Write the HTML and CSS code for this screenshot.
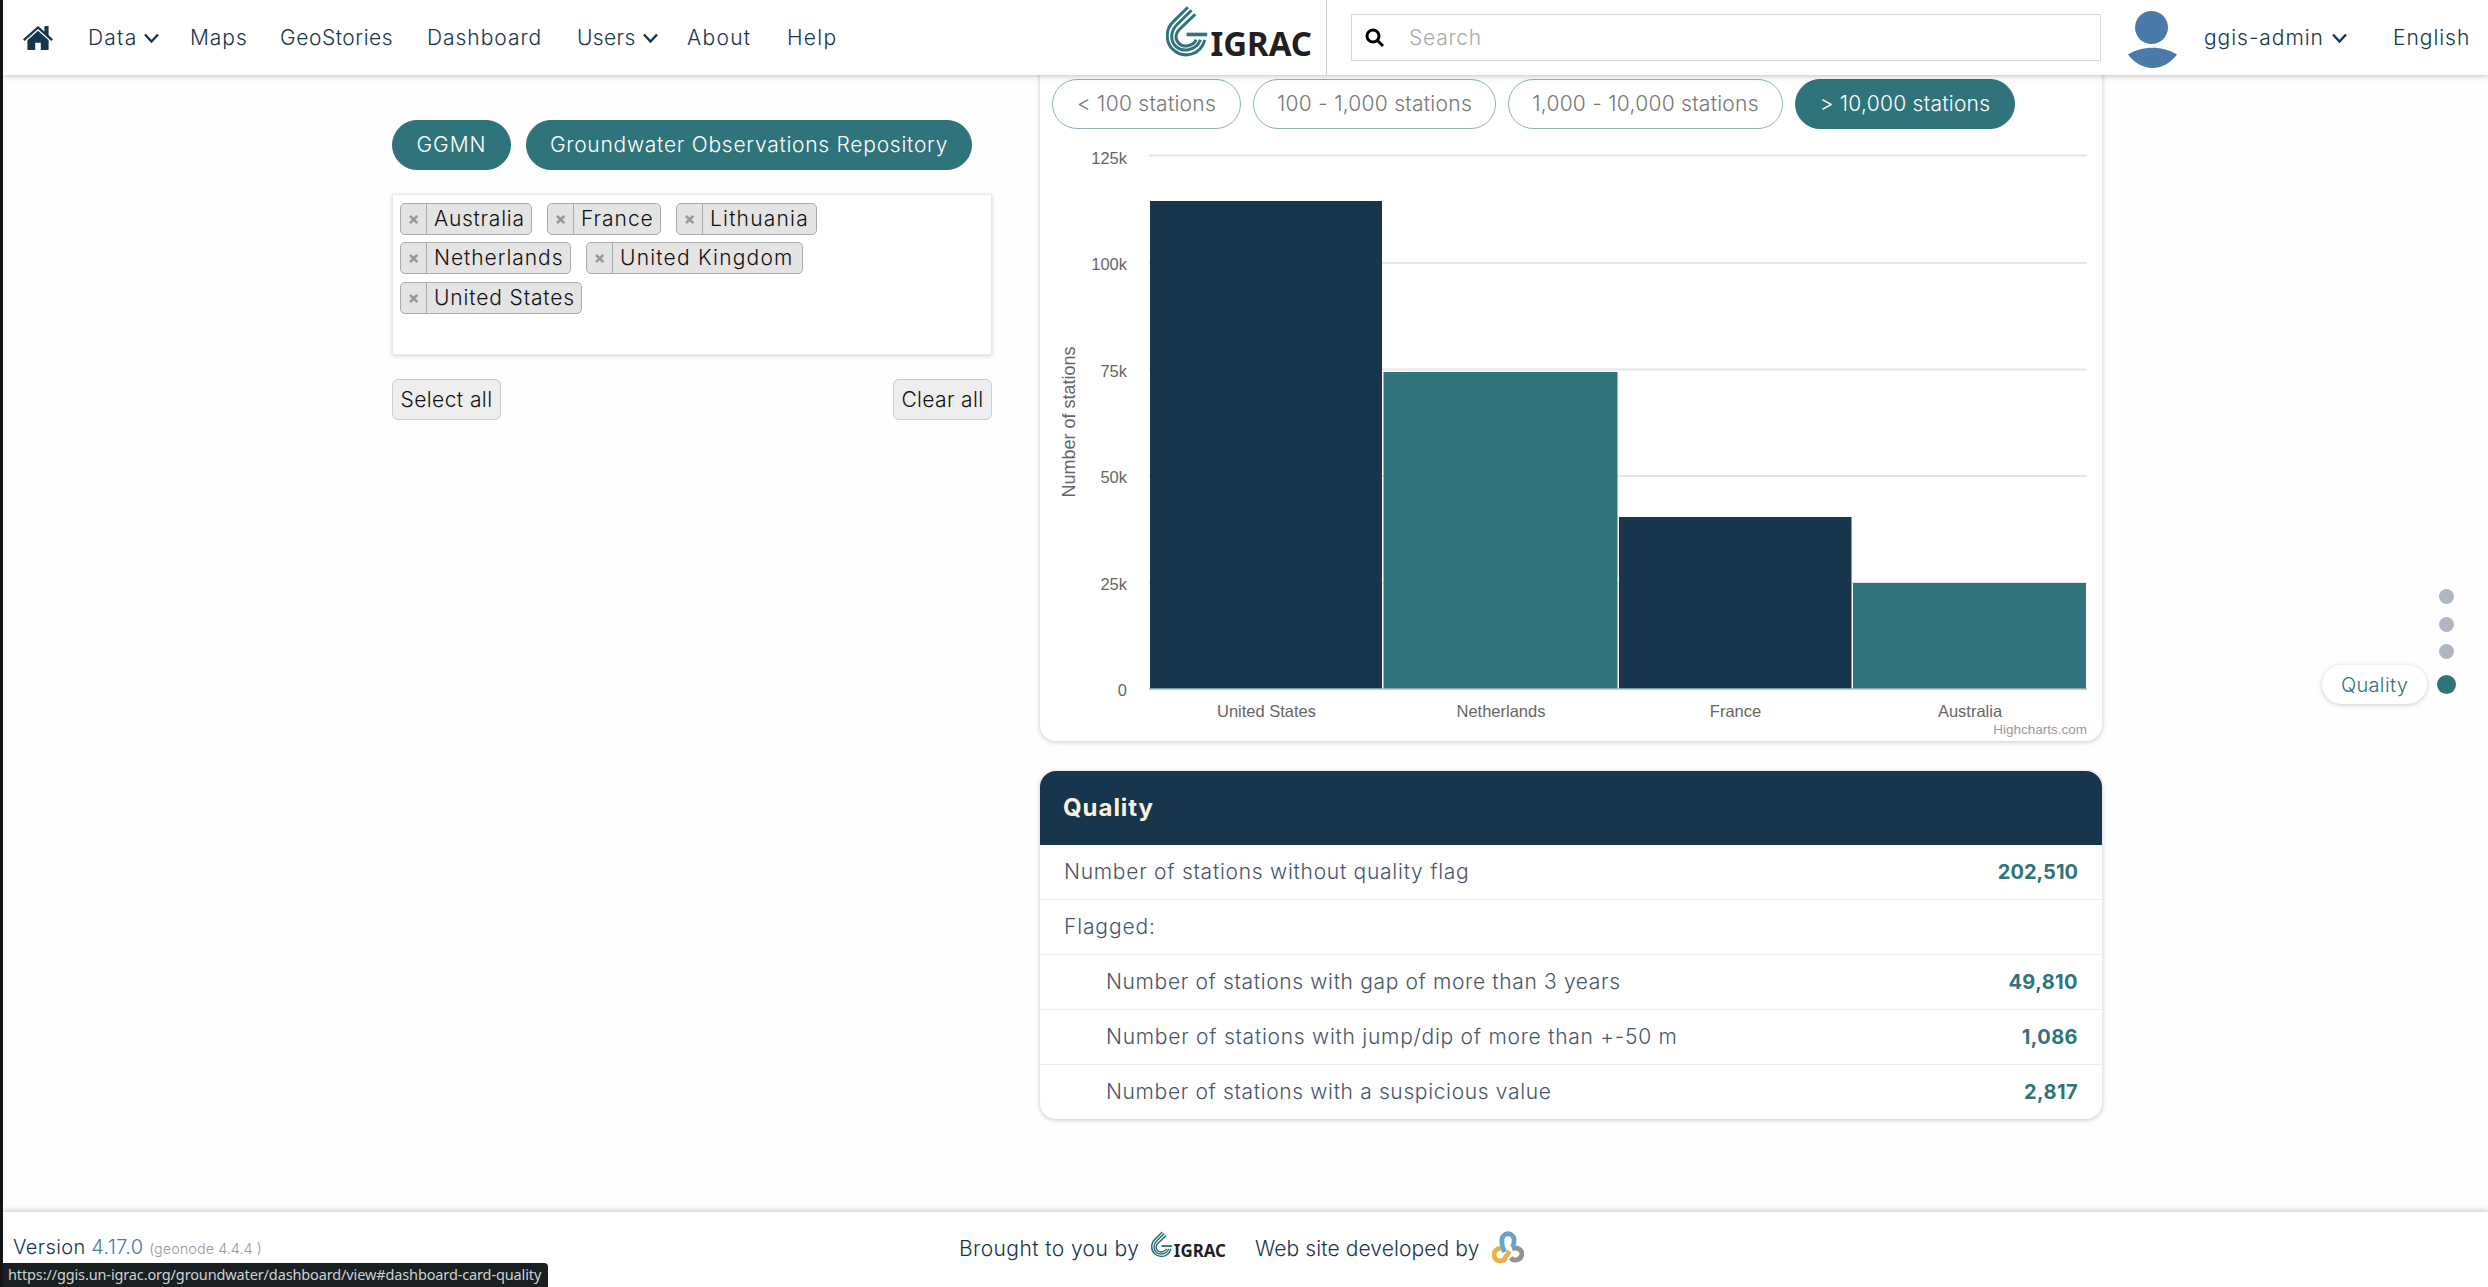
FILE: index.html
```html
<!DOCTYPE html>
<html lang="en">
<head>
<meta charset="utf-8">
<title>Groundwater dashboard</title>
<link rel="stylesheet" href="styles.css">
</head>
<body>
<svg width="0" height="0" class="defs" aria-hidden="true">
  <symbol id="logo" viewBox="46 18 440 152">
    <g fill="none" stroke="#30747b" stroke-width="9">
      <path d="M112 21L68 64C42 88 46 128 66 147C98 178 150 166 163 119"/>
      <path d="M123 30L80 72C58 94 59 122 75 138C98 160 138 150 150 119"/>
      <path d="M134 42L92 82C73 98 72 116 84 129C100 145 127 138 137 119"/>
      <path d="M108 103H170" stroke-width="11"/>
    </g>
    <text x="180" y="168" font-family="Noto Sans" font-weight="700" font-size="100" fill="#231f20" textLength="306" lengthAdjust="spacingAndGlyphs">IGRAC</text>
  </symbol>
</svg>
<header class="topbar">
  <nav class="nav">
    <a><svg class="home" viewBox="0 0 30 24"><path d="M15 0L0 13.2l1.6 1.7L15 3l13.4 11.9 1.6-1.7-4.4-3.9V0h-4.200v5.600z"/><path d="M15 4.800L4.400 14.200V24h7.800v-7.200h5.600V24h7.800v-9.800z"/></svg></a>
    <a><span class="ls-16">Data</span><svg class="chev" viewBox="0 0 15 10"><path d="M1 1.500L7.500 8.500L14 1.500"/></svg></a>
    <a><span class="ls-14">Maps</span></a>
    <a><span class="ls-10">GeoStories</span></a>
    <a><span class="ls-14">Dashboard</span></a>
    <a><span class="ls-8">Users</span><svg class="chev" viewBox="0 0 15 10"><path d="M1 1.500L7.500 8.500L14 1.500"/></svg></a>
    <a><span class="ls-18">About</span></a>
    <a><span class="ls-18">Help</span></a>
  </nav>
  <div class="brand"><svg class="logo"><use href="#logo"/></svg></div>
  <div class="search"><svg class="mag" viewBox="0 0 20 20"><circle cx="8" cy="8" r="6"/><path d="M12.500 12.500L18 18"/></svg><span class="ls-12">Search</span></div>
  <svg class="avatar" viewBox="0 0 49 57"><circle cx="23.500" cy="16.500" r="16.500"/><path d="M0 43.500C14 34.500 35 34.500 49 43.500C35 61.500 14 61.500 0 43.500z"/></svg>
  <div class="user"><span class="ls-14">ggis-admin</span><svg class="chev" viewBox="0 0 15 10"><path d="M1 1.500L7.500 8.500L14 1.500"/></svg></div>
  <div class="lang"><span class="ls-14">English</span></div>
</header>
<main class="page">
  <aside class="filters">
    <div class="sources"><span class="pill on w-ggmn"><span class="ls-14">GGMN</span></span><span class="pill on w-repo"><span class="ls-12">Groundwater Observations Repository</span></span></div>
    <div class="countries">
      <div class="tags"><span class="tag a1"><b>×</b><span class="ls-12">Australia</span></span><span class="tag a2"><b>×</b><span class="ls-14">France</span></span><span class="tag a3"><b>×</b><span class="ls-16">Lithuania</span></span></div>
      <div class="tags"><span class="tag a4"><b>×</b><span class="ls-14">Netherlands</span></span><span class="tag a5"><b>×</b><span class="ls-16">United Kingdom</span></span></div>
      <div class="tags"><span class="tag a6"><b>×</b><span class="ls-13">United States</span></span></div>
    </div>
    <div class="actions"><button class="btn b1"><span class="ls-9">Select all</span></button><button class="btn b2"><span class="ls-8">Clear all</span></button></div>
  </aside>
  <section class="cards">
    <article class="card chart">
      <div class="ranges"><span class="pill r1"><span class="ls-7">&lt; 100 stations</span></span><span class="pill r2"><span class="ls-7">100 - 1,000 stations</span></span><span class="pill r3"><span class="ls-7">1,000 - 10,000 stations</span></span><span class="pill on r4"><span class="ls-7">&gt; 10,000 stations</span></span></div>
      <svg class="plot" viewBox="1040 129 1062 612">
        <g class="grid"><path d="M1149 155.500H2087M1149 263H2087M1149 369.500H2087M1149 476H2087M1149 583H2087"/></g>
        <rect class="navy" x="1150" y="201" width="232" height="488"/>
        <rect class="teal" x="1383.500" y="372" width="234" height="317"/>
        <rect class="navy" x="1619" y="517" width="232.500" height="172"/>
        <rect class="teal" x="1853" y="583" width="233" height="106"/>
        <path class="base" d="M1149 689H2087"/>
        <g class="lab end"><text x="1127" y="164">125k</text><text x="1127" y="270">100k</text><text x="1127" y="377">75k</text><text x="1127" y="483">50k</text><text x="1127" y="590">25k</text><text x="1127" y="696">0</text></g>
        <g class="lab mid"><text x="1266.500" y="717">United States</text><text x="1501" y="717">Netherlands</text><text x="1735.500" y="717">France</text><text x="1970" y="717">Australia</text></g>
        <text class="lab title" transform="translate(1074.500 422) rotate(-90)">Number of stations</text>
        <text class="credit" x="2087" y="734">Highcharts.com</text>
      </svg>
    </article>
    <article class="card quality">
      <h2><span class="ls-14">Quality</span></h2>
      <div class="row"><span class="ls-12">Number of stations without quality flag</span><strong>202,510</strong></div>
      <div class="row"><span class="ls-13">Flagged:</span></div>
      <div class="row sub"><span class="ls-11">Number of stations with gap of more than 3 years</span><strong class="ls-4">49,810</strong></div>
      <div class="row sub"><span class="ls-12">Number of stations with jump/dip of more than +-50 m</span><strong class="ls-4">1,086</strong></div>
      <div class="row sub"><span class="ls-11">Number of stations with a suspicious value</span><strong class="ls-4">2,817</strong></div>
    </article>
  </section>
</main>
<footer class="foot">
  <div class="version"><span class="ls-4">Version</span> <em class="ls-4">4.17.0</em> <small>(geonode 4.4.4 )</small></div>
  <div class="by"><span class="ls-9">Brought to you by</span><svg class="logo small"><use href="#logo"/></svg></div>
  <div class="dev"><span class="ls-6">Web site developed by</span>
    <svg class="knot" viewBox="0 0 32 32"><path stroke="#909294" d="M20 17.500C27 15.500 31 20 29.600 24.500C28 29.500 22 30.500 18.500 27"/><path stroke="#e8b14c" d="M14 27C11 31 4.500 31 2.600 26.500C0.500 21 5 16.500 9.500 17.500M12 28.500L17.500 20"/><path stroke="#67a3cd" d="M12.500 21C10 15 9.500 11 10 8C11.200 1 20.800 1 22 8C22.500 11 21.500 14 20.500 16"/></svg>
  </div>
</footer>
<nav class="dots"><i></i><i></i><i></i><div class="cur"><span class="tip"><span class="ls-8">Quality</span></span><i></i></div></nav>
<div class="status">https://ggis.un-igrac.org/groundwater/dashboard/view#dashboard-card-quality</div>
</body>
</html>
```
FILE: styles.css
```css
* { box-sizing: border-box; }
body {
  margin: 0;
  width: 2488px;
  height: 1287px;
  overflow: hidden;
  position: relative;
  display: flex;
  flex-direction: column;
  background: #fefefe;
  border-left: 3px solid #111315;
  font: 300 21px/24px Inter, sans-serif;
  color: #17364d;
  white-space: nowrap;
}
.defs { position: absolute; }
.ls-4 { letter-spacing: .4px; }
.ls-6 { letter-spacing: .1px; }
.ls-7 { letter-spacing: .27px; }
.ls-8 { letter-spacing: .35px; }
.ls-9 { letter-spacing: .42px; }
.ls-10 { letter-spacing: .55px; }
.ls-11 { letter-spacing: .65px; }
.ls-12 { letter-spacing: .74px; }
.ls-13 { letter-spacing: .86px; }
.ls-14 { letter-spacing: .96px; }
.ls-16 { letter-spacing: 1.200px; }
.ls-18 { letter-spacing: 1.300px; }
.topbar {
  height: 75px;
  flex: none;
  display: flex;
  align-items: center;
  background: #fff;
  box-shadow: 0 1px 6px rgba(0, 0, 0, .25);
  position: relative;
  z-index: 2;
  font-weight: 350;
}
.nav {
  display: grid;
  grid-template-columns: 65px 102px 90px 147px 150px 110px 100px 60px;
  margin-left: 20px;
  width: 1143px;
  align-items: center;
}
.nav a { display: flex; align-items: center; justify-content: flex-start; gap: 7px; }
.home { width: 30px; height: 24px; fill: #17364d; }
.chev { width: 15px; height: 10px; fill: none; stroke: #17364d; stroke-width: 2.4; }
.brand { width: 161px; height: 75px; border-right: 1px solid #ccc; padding-top: 6px; }
.logo { width: 146px; height: 51px; display: block; }
.logo.small { width: 75px; height: 27px; }
.search {
  margin-left: 24px;
  width: 750px;
  height: 47px;
  border: 1px solid #d6d6d6;
  display: flex;
  align-items: center;
  padding-left: 13px;
  gap: 24px;
  color: #aaa;
  font-weight: 300;
}
.mag { width: 20px; height: 20px; fill: none; stroke: #000; stroke-width: 3; }
.avatar { width: 49px; height: 57px; margin: 4px 0 0 27px; fill: #4a7aaa; }
.user { width: 189px; margin-left: 27px; display: flex; align-items: center; gap: 8px; }
.page { height: 1137px; display: flex; padding-left: 389px; }
.filters { width: 600px; padding-top: 45px; }
.sources { display: flex; gap: 15px; margin-bottom: 24px; }
.pill {
  height: 50px;
  border-radius: 25px;
  border: 1px solid #8ab3b8;
  display: flex;
  align-items: center;
  justify-content: center;
  color: #777;
}
.pill.on { background: #30747b; border-color: #30747b; color: #fff; }
.w-ggmn { width: 119px; }
.w-repo { width: 446px; }
.countries {
  height: 161px;
  border: 1px solid #eaeaea;
  box-shadow: 0 1px 4px rgba(0, 0, 0, .18);
  background: #fff;
  padding: 8px 7px;
}
.tags { display: flex; gap: 15px; margin-bottom: 7px; }
.tags + .tags { margin-bottom: 8px; }
.tag {
  height: 32px;
  border: 1px solid #aaa;
  border-radius: 5px;
  background: #e4e4e4;
  display: flex;
  align-items: center;
  color: #111;
}
.tag b {
  width: 26px;
  height: 30px;
  line-height: 29px;
  border-right: 1px solid #aaa;
  text-align: center;
  margin-right: 7px;
  color: #999;
  font-size: 17px;
  font-weight: 800;
}
.a1 { width: 132px; }
.a2 { width: 114px; }
.a3 { width: 141px; }
.a4 { width: 171px; }
.a5 { width: 217px; }
.a6 { width: 182px; }
.actions { display: flex; justify-content: space-between; margin-top: 24px; }
.btn {
  height: 41px;
  border: 1px solid #ccc;
  border-radius: 6px;
  background: #eee;
  font: inherit;
  color: #111;
  padding: 0;
}
.b1 { width: 109px; }
.b2 { width: 99px; }
.cards { width: 1062px; margin-left: 48px; }
.card { background: #fff; border-radius: 16px; box-shadow: 0 1px 5px rgba(0, 0, 0, .22); overflow: hidden; }
.chart { height: 686px; margin-top: -20px; padding-top: 24px; }
.ranges { display: flex; gap: 12px; padding-left: 12px; }
.r1 { width: 189px; }
.r2 { width: 243px; }
.r3 { width: 275px; }
.r4 { width: 220px; }
.plot { width: 1062px; height: 612px; display: block; }
.grid path { stroke: #e6e6e6; stroke-width: 2; }
.navy { fill: #17364d; }
.teal { fill: #30747b; }
.base { stroke: #a9bcc6; stroke-width: 1.500; }
.lab { font: 400 16.500px "Liberation Sans", sans-serif; fill: #666; }
.end { text-anchor: end; }
.mid, .title { text-anchor: middle; }
.title { font-size: 18px; }
.credit { font: 400 13.500px "Liberation Sans", sans-serif; fill: #999; text-anchor: end; }
.quality { margin-top: 30px; height: 348px; }
.quality h2 {
  margin: 0;
  height: 74px;
  background: #17364d;
  color: #fcf0de;
  font-size: 24px;
  font-weight: 700;
  line-height: 74px;
  padding-left: 23px;
}
.row {
  height: 55px;
  border-bottom: 1px solid #ececee;
  display: flex;
  align-items: center;
  justify-content: space-between;
  padding: 0 24px;
  color: #48556a;
}
.row:last-child { border: 0; height: 54px; }
.sub { padding-left: 66px; }
.row strong { color: #30747b; font-weight: 700; font-size: 20px; }
.foot {
  height: 75px;
  display: flex;
  background: #fff;
  box-shadow: 0 -1px 6px rgba(0, 0, 0, .25);
  position: relative;
}
.version { width: 946px; padding: 23px 0 0 10px; font-size: 20px; }
.version em { font-style: normal; color: #4a7aaa; }
.version small { font-size: 14.500px; color: #999; }
.by { width: 306px; padding: 19px 0 0 10px; display: flex; gap: 12px; }
.by span, .dev span { padding-top: 6px; }
.dev { padding-top: 19px; display: flex; gap: 13px; }
.knot { width: 32px; height: 32px; fill: none; stroke-width: 4.800; }
.dots { position: absolute; right: 32px; top: 589px; display: flex; flex-direction: column; align-items: flex-end; gap: 12.500px; z-index: 3; }
.dots > i { width: 15px; height: 15px; border-radius: 50%; background: #b0b7c3; margin-right: 2px; }
.cur { display: flex; align-items: center; gap: 10px; margin-top: -7px; }
.cur i { width: 19px; height: 19px; border-radius: 50%; background: #30747b; }
.tip { width: 105px; height: 39px; border-radius: 20px; background: #fff; box-shadow: 0 1px 5px rgba(0, 0, 0, .2); display: flex; align-items: center; justify-content: center; padding-top: 1px; color: #30747b; font-weight: 350; font-size: 20px; }
.status {
  position: absolute;
  left: 0;
  bottom: 0;
  width: 545px;
  height: 24px;
  background: #1a2022;
  border-top-right-radius: 4px;
  color: #cdd2d4;
  font: 400 14.500px/22px "Noto Sans", sans-serif;
  letter-spacing: -.13px;
  padding-left: 5px;
  z-index: 4;
}
```
